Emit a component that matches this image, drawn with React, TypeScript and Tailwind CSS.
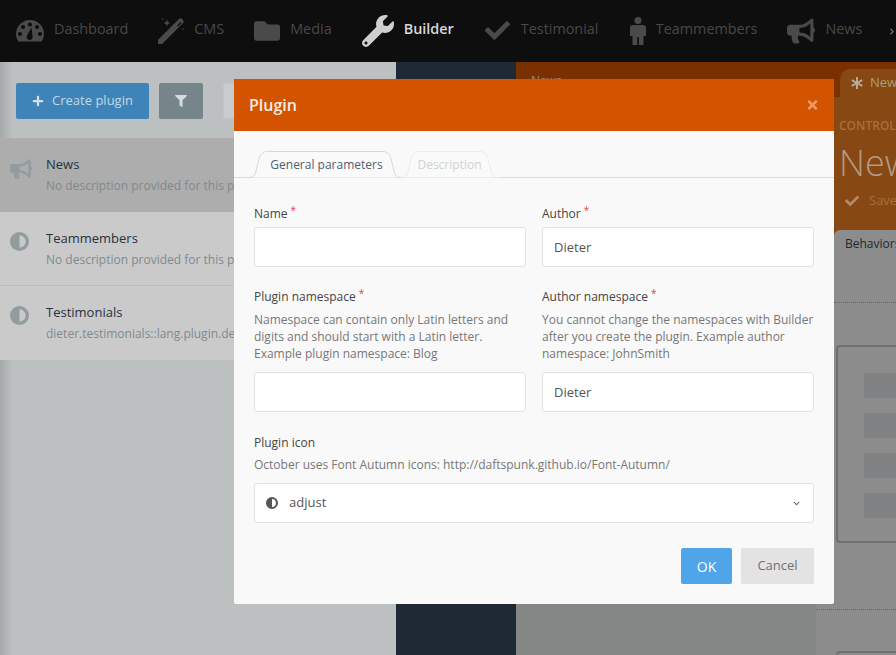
import React from 'react';
import {
  FaAsterisk,
  FaBullhorn,
  FaCheck,
  FaChevronDown,
  FaChevronRight,
  FaFilter,
  FaFolder,
  FaPlus,
  FaTimes,
  FaWrench,
} from 'react-icons/fa';

const DashIcon = () => (
  <svg width="28" height="22" viewBox="0 0 28 22" fill="currentColor">
    <path d="M2.5 21.5C.8 19 0 16.5 0 14 0 6.3 6.3 0 14 0s14 6.3 14 14c0 2.5-.8 5-2.500 7.500Z" />
    <g fill="#0e0e0e">
      <circle cx="14" cy="4.500" r="2.100" />
      <circle cx="7" cy="7" r="2.100" />
      <circle cx="21" cy="7" r="2.100" />
      <circle cx="4" cy="14" r="2.100" />
      <circle cx="24" cy="14" r="2.100" />
      <path d="M15.500 7.500 16.500 16a3 3 0 1 1-5.200-1Z" />
    </g>
  </svg>
);

const WandIcon = () => (
  <svg width="26" height="26" viewBox="0 0 26 26" fill="currentColor">
    <path d="M2.500 23.500 22.500 3.500" stroke="currentColor" strokeWidth="6" strokeLinecap="round" />
    <path d="M19.500 8 23 4.500" stroke="#0e0e0e" strokeWidth="1.200" />
    <path d="M9 1.500l.9 2.600 2.600.9-2.600.9L9 8.500l-.9-2.600L5.500 5l2.600-.9Z" />
    <circle cx="4.500" cy="1" r=".8" />
    <circle cx="25" cy="11" r=".8" />
  </svg>
);

const MaleIcon = () => (
  <svg width="16" height="28" viewBox="0 0 16 28" fill="currentColor">
    <circle cx="8" cy="3.500" r="3.500" />
    <path d="M3 8h10a3 3 0 0 1 3 3v8h-2.500v9H8.800v-8H7.200v8H2.500v-9H0v-8a3 3 0 0 1 3-3Z" />
  </svg>
);

const AdjustIcon = ({ size }: { size: number }) => (
  <svg width={size} height={size} viewBox="0 0 20 20" fill="currentColor">
    <path fillRule="evenodd" d="M10 0a10 10 0 1 1 0 20 10 10 0 0 1 0-20Zm0 3.500v13a6.500 6.500 0 0 0 0-13Z" />
  </svg>
);

const navItems = [
  { label: 'Dashboard', icon: <DashIcon />, box: 'w-[28px]', text: '' },
  { label: 'CMS', icon: <WandIcon />, box: 'w-[26px]', text: '' },
  { label: 'Media', icon: <FaFolder className="w-[26px] h-[26px]" />, box: 'w-[26px]', text: '' },
  { label: 'Builder', icon: <FaWrench className="w-[32px] h-[32px]" />, box: 'w-[32px]', text: '', active: true },
  { label: 'Testimonial', icon: <FaCheck className="w-[25px] h-[25px]" />, box: 'w-[27px]', text: 'w-[79px]' },
  { label: 'Teammembers', icon: <MaleIcon />, box: 'w-[16px]', text: '' },
  { label: 'News', icon: <FaBullhorn className="w-[28px] h-[28px]" />, box: 'w-[28px]', text: '' },
];

const plugins = [
  { name: 'News', desc: 'No description provided for this plugin', icon: <FaBullhorn className="w-[22px] h-[22px]" />, bg: 'bg-[#adadad]' },
  { name: 'Teammembers', desc: 'No description provided for this plugin', icon: <AdjustIcon size={19} />, bg: 'bg-[#cacaca] border-b border-[#bdbdbd]' },
  { name: 'Testimonials', desc: 'dieter.testimonials::lang.plugin.description', icon: <AdjustIcon size={19} />, bg: 'bg-[#cacaca]' },
];

const TabShape = ({ width, stroke }: { width: number; stroke: string }) => (
  <svg className="absolute left-0 top-0" width={width} height={27} viewBox={`0 0 ${width} 27`}>
    <path
      d={`M0 26.500C3.500 26.500 5.500 25 6.500 22L10 8C11.500 3 14 .5 18 .5L${width - 18} .5C${width - 14} .5 ${width - 11.5} 3 ${width - 10} 8L${width - 6.5} 22C${width - 5.5} 25 ${width - 3.5} 26.500 ${width} 26.500`}
      fill="#fafafa"
      stroke={stroke}
    />
  </svg>
);

const Label = ({ text, required }: { text: string; required?: boolean }) => (
  <label className="block h-[17px] text-[12px] leading-[17px] text-[#444] mb-[5px]">
    {text}
    {required && <span className="text-[#e5404f] text-[10px] leading-[10px] ml-[3px] relative -top-[4px]">*</span>}
  </label>
);

const TextInput = ({ value }: { value?: string }) => (
  <input
    readOnly
    value={value ?? ''}
    className="block w-full h-[40px] bg-white border border-[#e2e2e2] rounded-[3px] px-[11px] text-[13px] text-[#555] outline-none"
  />
);

export default function App() {
  return (
    <div className="relative w-[896px] h-[655px] overflow-hidden flex flex-col font-['Open_Sans',sans-serif]">
      {/* top nav */}
      <div className="h-[62px] bg-[#0e0e0e] flex items-center pl-[16px] gap-[30px] shrink-0 relative">
        {navItems.map((item) => (
          <div
            key={item.label}
            className={`flex items-center gap-[10px] text-[14.4px] ${item.active ? 'text-[#d9d9d9] font-semibold' : 'text-[#484848]'}`}
          >
            <span className={`${item.box} flex justify-center ${item.active ? 'text-[#cfcfcf]' : 'text-[#4a4a4a]'}`}>{item.icon}</span>
            <span className={`mb-[4px] ${item.text}`}>{item.label}</span>
          </div>
        ))}
        <FaChevronRight className="absolute left-[889px] top-[28px] w-[6px] h-[7px] text-[#777]" />
      </div>

      <div className="flex flex-1 min-h-0">
        {/* plugin list */}
        <div className="w-[396px] bg-[#bcc0c0] bg-gradient-to-r from-[#a5a8a8] to-[#bcc0c0] to-[3%]">
          <div className="h-[76px] flex items-center pl-[16px] pt-[1px]">
            <button className="w-[133px] h-[36px] bg-[#3e84b8] rounded-[2px] flex items-center justify-center gap-[8px] text-[13px] text-[#c3d7e6]">
              <FaPlus className="w-[12px] h-[12px] text-[#d5dfe6]" />
              Create plugin
            </button>
            <button className="ml-[10px] w-[44px] h-[36px] bg-[#76858a] rounded-[2px] flex items-center justify-center">
              <FaFilter className="w-[12px] h-[12px] text-[#d5dadb]" />
            </button>
            <div className="ml-[20px] w-[120px] h-[36px] bg-[#c9cccc] rounded-[3px] border border-[#c4c7c7]" />
          </div>
          {plugins.map((p) => (
            <div key={p.name} className={`h-[74px] flex pl-[10px] pt-[16px] ${p.bg}`}>
              <span className="w-[36px] pt-[4px] text-[#929b9e]">{p.icon}</span>
              <div className="whitespace-nowrap">
                <div className="text-[13px] leading-[20px] text-[#26323c]">{p.name}</div>
                <div className="text-[12px] leading-[20px] mt-[2px] text-[#7e8a8e]">{p.desc}</div>
              </div>
            </div>
          ))}
        </div>

        <div className="w-[120px] bg-[#1e2935]" />

        {/* center column */}
        <div className="w-[300px] flex flex-col">
          <div className="h-[36px] bg-[#7a3000] pl-[15px] pt-[10px] text-[12px] text-[#a98a6e]">News</div>
          <div className="flex-1 bg-[#858786]" />
        </div>

        {/* right column */}
        <div className="w-[80px] flex flex-col bg-[#8c8c8c] whitespace-nowrap overflow-hidden">
          <div className="h-[35px] bg-[#7a3000] pl-[24px] pt-[7px] shrink-0">
            <div className="h-[28px] bg-[#874813] rounded-tl-[10px] flex items-center pl-[11px] gap-[7px] text-[13px] text-[#a8a070]">
              <FaAsterisk className="w-[12px] h-[12px] shrink-0 text-[#b5ada0]" />
              News
            </div>
          </div>
          <div className="h-[133px] bg-[#874813] pl-[23px] shrink-0">
            <div className="text-[12px] font-semibold leading-[15px] pt-[21px] text-[#a5703c]">CONTROLLER</div>
            <div className="text-[36px] font-light leading-[44px] mt-[8px] text-[#b39a85]">News</div>
            <div className="flex items-center gap-[10px] pl-[6px] mt-[6px] text-[13px] text-[#a5703c]">
              <FaCheck className="w-[14px] h-[14px] shrink-0 text-[#b58a66]" />
              Save
            </div>
          </div>
          <div className="bg-[#874813] shrink-0">
            <div className="ml-[18px] h-[73px] bg-[#8c8c8c] rounded-tl-[6px] border-b border-dotted border-[#666] pl-[11px] pt-[5px] text-[12px] text-[#1f2730]">
              Behaviors
            </div>
          </div>
          <div className="pl-[20px] pt-[42px] h-[307px] border-b border-dotted border-[#666] shrink-0">
            <div className="h-[198px] w-[80px] border-2 border-[#6e7073] rounded-[4px] pl-[26px] pt-[26px] flex flex-col gap-[15px]">
              <div className="h-[25px] bg-[#808284]" />
              <div className="h-[25px] bg-[#808284]" />
              <div className="h-[25px] bg-[#808284]" />
              <div className="h-[25px] bg-[#808284]" />
            </div>
          </div>
          <div className="pl-[20px] pt-[41px]">
            <div className="h-[20px] w-[80px] border-2 border-[#6e7073] rounded-[4px]" />
          </div>
        </div>
      </div>

      {/* modal */}
      <div className="absolute left-[234px] top-[79px] w-[600px] h-[525px] bg-[#f9f9f9] rounded-[2px] flex flex-col">
        <div className="h-[52px] bg-[#d35400] flex items-center justify-between pl-[15px] pr-[15px] shrink-0">
          <span className="text-[16px] font-semibold text-[#f7ece4]">Plugin</span>
          <FaTimes className="w-[13px] h-[14px] text-[#ee9a66]" />
        </div>

        <div className="h-[47px] border-b border-[#dcdcdc] flex items-end pl-[15px] shrink-0">
          <div className="relative w-[152px] h-[27px] -mb-px flex items-center justify-center pl-[3px] text-[12px] text-[#4f5f6f]">
            <TabShape width={152} stroke="#d8d8d8" />
            <span className="relative">General parameters</span>
          </div>
          <div className="relative w-[97px] h-[27px] -mb-px flex items-center justify-center text-[12px] text-[#cfd2d4]">
            <TabShape width={97} stroke="#ececec" />
            <span className="relative">Description</span>
          </div>
        </div>

        <div className="px-[20px] pt-[27px]">
          <div className="grid grid-cols-2 gap-x-[16px]">
            <div>
              <Label text="Name" required />
              <TextInput />
            </div>
            <div>
              <Label text="Author" required />
              <TextInput value="Dieter" />
            </div>
            <div className="mt-[21px] flex flex-col">
              <Label text="Plugin namespace" required />
              <p className="text-[12px] leading-[17px] text-[#777] mt-[1px] mb-[10px] flex-1">
                Namespace can contain only Latin letters and digits and should start with a Latin letter. Example plugin namespace: Blog
              </p>
              <TextInput />
            </div>
            <div className="mt-[21px] flex flex-col">
              <Label text="Author namespace" required />
              <p className="text-[12px] leading-[17px] text-[#777] mt-[1px] mb-[10px] flex-1">
                You cannot change the namespaces with Builder after you create the plugin. Example author namespace: JohnSmith
              </p>
              <TextInput value="Dieter" />
            </div>
          </div>

          <div className="mt-[22px]">
            <div className="text-[12px] leading-[17px] text-[#444]">Plugin icon</div>
            <p className="text-[12px] leading-[17px] mt-[5px] text-[#777]">
              October uses Font Autumn icons: http://daftspunk.github.io/Font-Autumn/
            </p>
            <div className="mt-[10px] h-[40px] bg-white border border-[#e2e2e2] rounded-[3px] flex items-center pl-[11px] pr-[13px] text-[13px] text-[#555]">
              <span className="text-[#555]"><AdjustIcon size={12} /></span>
              <span className="ml-[11px] flex-1">adjust</span>
              <FaChevronDown className="w-[7px] h-[7px] text-[#666]" />
            </div>
          </div>

          <div className="mt-[25px] flex justify-end gap-[9px]">
            <button className="w-[51px] h-[36px] bg-[#4ea5ea] rounded-[2px] text-[14px] text-white">OK</button>
            <button className="w-[73px] h-[36px] bg-[#e3e3e3] rounded-[2px] text-[13px] text-[#6f6f6f]">Cancel</button>
          </div>
        </div>
      </div>
    </div>
  );
}
